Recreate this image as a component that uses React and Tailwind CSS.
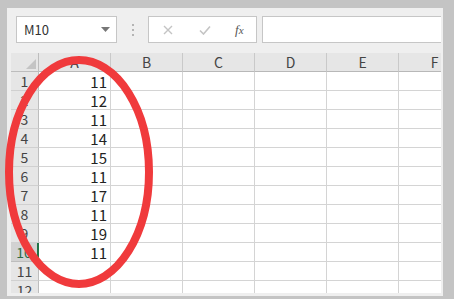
import React from 'react';

const values = [11, 12, 11, 14, 15, 11, 17, 11, 19, 11, null, null];
const columns = ['A', 'B', 'C', 'D', 'E', 'F'];
const font = { fontFamily: '"Noto Sans CJK SC", "Noto Sans", sans-serif' };

export default function App() {
  return (
    <div
      className="relative w-[454px] h-[299px] overflow-hidden bg-[#c4c4c4] pt-[8px] pl-[7px] pr-[11px] pb-[3px]"
      style={font}
    >
      <div className="flex flex-col h-full bg-[#efefef] pr-[2px] pb-[3px]">
        {/* formula bar */}
        <div className="flex items-start h-[45px] shrink-0 pt-[8px] pl-[9px]">
          <div className="flex items-center justify-between w-[101px] h-[27px] bg-white border border-[#c6c6c6] pl-[7px] pr-[6px]">
            <span className="text-[13px] text-[#333] leading-none">M10</span>
            <svg width="9" height="5" viewBox="0 0 9 5">
              <path d="M0 0 H9 L4.5 5 Z" fill="#777" />
            </svg>
          </div>
          <div className="w-[31px] h-[27px] flex flex-col items-center justify-center gap-[3px]">
            <span className="w-[2px] h-[2px] bg-[#b4b4b4]" />
            <span className="w-[2px] h-[2px] bg-[#b4b4b4]" />
            <span className="w-[2px] h-[2px] bg-[#b4b4b4]" />
          </div>
          <div className="flex items-center w-[109px] h-[27px] bg-white border border-[#c6c6c6]">
            <svg className="ml-[14px]" width="10" height="10" viewBox="0 0 10 10">
              <path d="M1 1 L9 9 M9 1 L1 9" stroke="#c4c4c4" strokeWidth="1.4" />
            </svg>
            <svg className="ml-[26px]" width="12" height="10" viewBox="0 0 12 10">
              <path d="M1 5.5 L4.5 9 L11 1.5" stroke="#c4c4c4" strokeWidth="1.6" fill="none" />
            </svg>
            <span
              className="ml-[24px] text-[13px] italic text-[#555] leading-none"
              style={{ fontFamily: '"Liberation Serif", serif' }}
            >
              f<span className="text-[11px]">x</span>
            </span>
          </div>
          <div className="flex-1 h-[27px] ml-[5px] bg-white border-y border-l border-[#c6c6c6]" />
        </div>

        {/* sheet */}
        <div className="flex-1 ml-[4px] bg-white overflow-hidden">
          <div className="grid grid-cols-[28px_repeat(6,72px)]">
            <div className="relative h-[19px] bg-[#e6e6e6] border-r border-b border-[#bdbdbd]">
              <svg className="absolute right-[2px] bottom-[2px]" width="10" height="10" viewBox="0 0 10 10">
                <path d="M10 0 V10 H0 Z" fill="#c4c4c4" />
              </svg>
            </div>
            {columns.map((c) => (
              <div
                key={c}
                className="h-[19px] bg-[#e6e6e6] border-r border-b border-[#c9c9c9] border-b-[#b8b8b8] flex items-center justify-center text-[14px] text-[#444] leading-none"
              >
                {c}
              </div>
            ))}
            {values.map((v, i) => (
              <React.Fragment key={i}>
                <div
                  className={
                    i === 9
                      ? 'h-[19px] bg-[#d2d2d2] border-r-2 border-r-[#217346] border-b border-b-[#bdbdbd] flex items-center justify-center text-[14px] text-[#2e6b48] leading-none'
                      : 'h-[19px] bg-[#e6e6e6] border-r border-b border-[#bdbdbd] border-b-[#d0d0d0] flex items-center justify-center text-[14px] text-[#444] leading-none'
                  }
                >
                  {i + 1}
                </div>
                {columns.map((c) => (
                  <div
                    key={c}
                    className="h-[19px] border-r border-b border-[#d4d4d4] flex items-end justify-end pr-[3px] pb-[1px] text-[15px] text-[#222] leading-none"
                  >
                    {c === 'A' && v !== null ? v : ''}
                  </div>
                ))}
              </React.Fragment>
            ))}
          </div>
        </div>
      </div>

      {/* red marker ellipse */}
      <svg className="absolute left-0 top-0 pointer-events-none" width="454" height="299" viewBox="0 0 454 299">
        <ellipse cx="79" cy="172" rx="70" ry="112" fill="none" stroke="#f03a3c" strokeWidth="8" />
      </svg>
    </div>
  );
}
